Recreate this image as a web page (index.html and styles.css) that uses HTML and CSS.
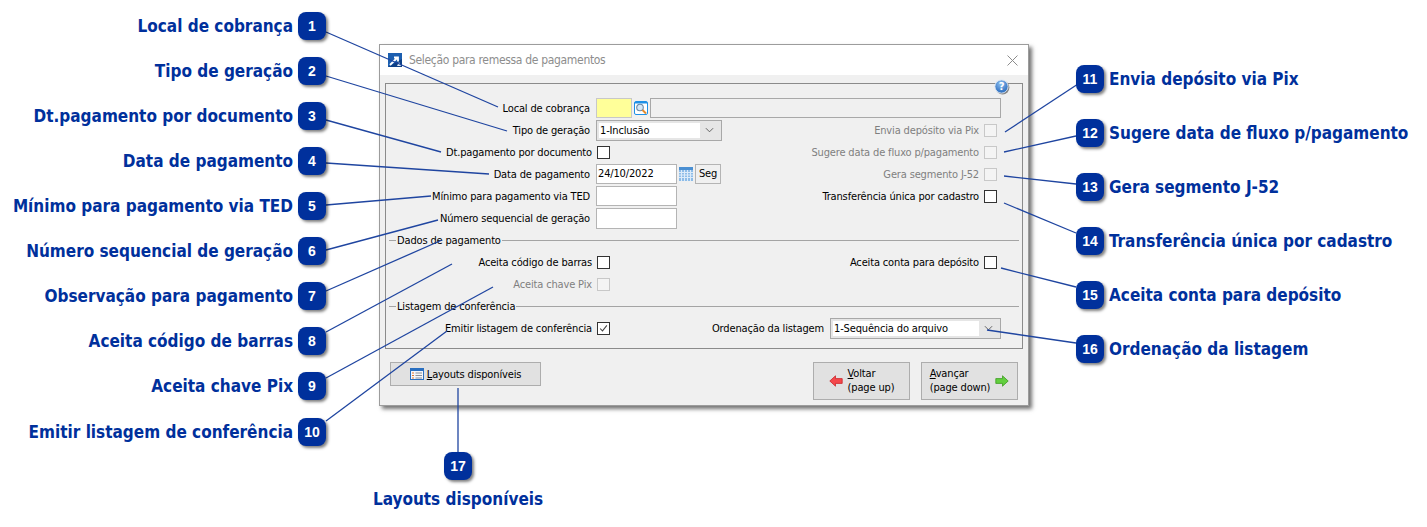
FILE: index.html
```html
<!DOCTYPE html>
<html lang="pt-BR">
<head>
<meta charset="utf-8">
<title>Seleção para remessa de pagamentos</title>
<link rel="stylesheet" href="styles.css">
</head>
<body>
<div class="stage">
  <section class="dialog">
    <header class="titlebar">
      <svg class="app-icon" viewBox="0 0 14 14"><rect width="14" height="14" fill="#1c5fb0"/><path d="M0 14 L14 14 L14 6 Z" fill="#0d3f86"/><path d="M2 12 L9 5 M6 4.500 H10 V8.500" fill="none" stroke="#fff" stroke-width="1.800"/><path d="M9 13 L11 9 L13 13 Z" fill="#dfe9f5"/></svg>
      <span class="title">Seleção para remessa de pagamentos</span>
      <svg class="close" viewBox="0 0 11 11"><path d="M0.500 0.500 L10.500 10.500 M10.500 0.500 L0.500 10.500" stroke="#8c8c8c" stroke-width="1" fill="none"/></svg>
    </header>
    <div class="panel">
      <svg class="help" viewBox="0 0 16 16"><defs><radialGradient id="hb" cx="45%" cy="30%" r="75%"><stop offset="0" stop-color="#8fc0f0"/><stop offset="1" stop-color="#1f62b8"/></radialGradient></defs><circle cx="8.600" cy="8.600" r="6.800" fill="#555" opacity=".7"/><circle cx="7.500" cy="7.500" r="6.600" fill="url(#hb)" stroke="#dce8f5" stroke-width=".9"/><text x="7.500" y="11" text-anchor="middle" class="help-mark">?</text></svg>
      <div class="row">
        <span class="lbl">Local de cobrança</span>
        <span class="field field-code"></span>
        <svg class="lookup" viewBox="0 0 14 14"><rect x=".5" y=".5" width="13" height="13" rx="1.500" fill="#fff" stroke="#1e90e6"/><rect x="1" y="1" width="12" height="1.500" fill="#1e90e6"/><circle cx="6" cy="6.500" r="3.300" fill="#d5e8f7" stroke="#6a8aa8" stroke-width="1.100"/><path d="M8.500 9 L12 12.500" stroke="#e58a2b" stroke-width="2"/></svg>
        <span class="field field-desc"></span>
      </div>
      <div class="row">
        <span class="lbl">Tipo de geração</span>
        <span class="select select-tipo"><span class="select-value">1-Inclusão</span><svg class="chev" viewBox="0 0 10 6"><path d="M1 1 L5 5 L9 1" fill="none" stroke="#555" stroke-width="1"/></svg></span>
        <span class="right"><span class="lbl-r off">Envia depósito via Pix</span><span class="check off"></span></span>
      </div>
      <div class="row">
        <span class="lbl lbl-c">Dt.pagamento por documento</span>
        <span class="check"></span>
        <span class="right"><span class="lbl-r off">Sugere data de fluxo p/pagamento</span><span class="check off"></span></span>
      </div>
      <div class="row">
        <span class="lbl">Data de pagamento</span>
        <span class="field field-num">24/10/2022</span>
        <svg class="calendar" viewBox="0 0 14 14"><rect width="14" height="14" fill="#8dbce8"/><rect width="14" height="3" fill="#4a8fd2"/><path d="M0 5.500 H14 M0 8 H14 M0 10.500 H14 M2.500 3 V14 M5.500 3 V14 M8.500 3 V14 M11.500 3 V14" stroke="#dcebf9" stroke-width="1"/></svg>
        <span class="field field-day">Seg</span>
        <span class="right"><span class="lbl-r off">Gera segmento J-52</span><span class="check off"></span></span>
      </div>
      <div class="row">
        <span class="lbl">Mínimo para pagamento via TED</span>
        <span class="field field-num"></span>
        <span class="right"><span class="lbl-r">Transferência única por cadastro</span><span class="check"></span></span>
      </div>
      <div class="row">
        <span class="lbl">Número sequencial de geração</span>
        <span class="field field-num field-tall"></span>
      </div>
      <div class="legend"><span>Dados de pagamento</span></div>
      <div class="row">
        <span class="lbl lbl-c">Aceita código de barras</span>
        <span class="check"></span>
        <span class="right"><span class="lbl-r">Aceita conta para depósito</span><span class="check"></span></span>
      </div>
      <div class="row">
        <span class="lbl lbl-c off">Aceita chave Pix</span>
        <span class="check off"></span>
      </div>
      <div class="legend"><span>Listagem de conferência</span></div>
      <div class="row">
        <span class="lbl lbl-c">Emitir listagem de conferência</span>
        <span class="check"><svg viewBox="0 0 13 13"><path d="M2.500 6.500 L5.300 9.300 L10.500 2.800" fill="none" stroke="#444" stroke-width="1.200"/></svg></span>
        <span class="right right-select"><span class="lbl-r">Ordenação da listagem</span><span class="select select-ord"><span class="select-value">1-Sequência do arquivo</span><svg class="chev" viewBox="0 0 10 6"><path d="M1 1 L5 5 L9 1" fill="none" stroke="#555" stroke-width="1"/></svg></span></span>
      </div>
    </div>
    <footer class="actions">
      <button class="btn btn-layouts" type="button">
        <svg class="ico-layouts" viewBox="0 0 14 12"><rect x=".5" y=".5" width="13" height="11" fill="#f4f6fa" stroke="#2a6fc0"/><rect x="1" y="1" width="12" height="2" fill="#2a6fc0"/><path d="M2 5 H4 M2 7.500 H4 M2 10 H4" stroke="#e2762a" stroke-width="1.200"/><path d="M5.500 5 H12 M5.500 7.500 H12 M5.500 10 H12" stroke="#8a8f98" stroke-width="1"/></svg>
        <span><u>L</u>ayouts disponíveis</span>
      </button>
      <button class="btn btn-nav btn-back" type="button">
        <svg class="arrow" viewBox="0 0 14 12"><path d="M6.500 .8 L.8 6 L6.500 11.200 V8.400 H13.200 V3.600 H6.500 Z" fill="#f4484c" stroke="#c9272c" stroke-width=".8"/></svg>
        <span class="btn-text"><u>V</u>oltar<br>(page up)</span>
      </button>
      <button class="btn btn-nav btn-next" type="button">
        <span class="btn-text"><u>A</u>vançar<br>(page down)</span>
        <svg class="arrow" viewBox="0 0 14 12"><path d="M7.500 .8 L13.200 6 L7.500 11.200 V8.400 H.8 V3.600 H7.500 Z" fill="#62cf3e" stroke="#3e9c22" stroke-width=".8"/></svg>
      </button>
    </footer>
  </section>

  <svg class="leaders" viewBox="0 0 1427 527">
    <g stroke="#1f45a0" stroke-width="1.300" fill="none">
      <path d="M326 32 L498 107"/><path d="M326 76 L507 131"/><path d="M326 120 L441 152"/><path d="M326 163 L489 174"/><path d="M326 205 L431 196"/><path d="M326 250 L438 220"/><path d="M326 291 L442 240"/><path d="M326 332 L452 264"/><path d="M326 378 L493 287"/><path d="M326 421 L447 331"/>
      <path d="M1005 132 L1078 84"/><path d="M1004 152 L1076 136"/><path d="M1004 176 L1076 184"/><path d="M1004 203 L1076 233"/><path d="M1001 268 L1076 287"/><path d="M987 330 L1076 343"/><path d="M458 388 V452"/>
    </g>
  </svg>

  <ol class="notes notes-left">
    <li><span class="note-text">Local de cobrança</span><b class="badge">1</b></li>
    <li><span class="note-text">Tipo de geração</span><b class="badge">2</b></li>
    <li><span class="note-text">Dt.pagamento por documento</span><b class="badge">3</b></li>
    <li><span class="note-text">Data de pagamento</span><b class="badge">4</b></li>
    <li><span class="note-text">Mínimo para pagamento via TED</span><b class="badge">5</b></li>
    <li><span class="note-text">Número sequencial de geração</span><b class="badge">6</b></li>
    <li><span class="note-text">Observação para pagamento</span><b class="badge">7</b></li>
    <li><span class="note-text">Aceita código de barras</span><b class="badge">8</b></li>
    <li><span class="note-text">Aceita chave Pix</span><b class="badge">9</b></li>
    <li><span class="note-text">Emitir listagem de conferência</span><b class="badge">10</b></li>
  </ol>
  <ol class="notes notes-right">
    <li><b class="badge">11</b><span class="note-text">Envia depósito via Pix</span></li>
    <li><b class="badge">12</b><span class="note-text">Sugere data de fluxo p/pagamento</span></li>
    <li><b class="badge">13</b><span class="note-text">Gera segmento J-52</span></li>
    <li><b class="badge">14</b><span class="note-text">Transferência única por cadastro</span></li>
    <li><b class="badge">15</b><span class="note-text">Aceita conta para depósito</span></li>
    <li><b class="badge">16</b><span class="note-text">Ordenação da listagem</span></li>
  </ol>
  <div class="note-bottom"><b class="badge">17</b><span class="note-text">Layouts disponíveis</span></div>
</div>
</body>
</html>
```
FILE: styles.css
```css
* { box-sizing: border-box; }
html, body { margin: 0; padding: 0; background: #fff; }
.stage {
  position: relative;
  width: 1427px;
  height: 527px;
  overflow: hidden;
  font-family: "DejaVu Sans", sans-serif;
}

/* dialog */
.dialog {
  position: absolute;
  left: 379px;
  top: 44px;
  width: 650px;
  height: 362px;
  background: #f0f0f0;
  border: 1px solid #9c9c9c;
  box-shadow: 3px 3px 4px rgba(0, 0, 0, .55);
  font-stretch: condensed;
  font-size: 11px;
  letter-spacing: -.15px;
  color: #000;
  display: flex;
  flex-direction: column;
}
.titlebar {
  height: 30px;
  background: #fff;
  display: flex;
  align-items: center;
  padding: 0 10px 0 8px;
}
.app-icon { width: 14px; height: 14px; flex: none; }
.title { margin-left: 7px; font-size: 12px; letter-spacing: -.32px; color: #8d8d8d; }
.close { width: 11px; height: 11px; margin-left: auto; }

.panel {
  position: relative;
  margin: 8px 5px 0;
  height: 266px;
  padding-top: 13px;
  border: 1px solid #8b8b8b;
}
.help { position: absolute; right: 12px; top: -5px; width: 16px; height: 16px; }
.help-mark { font: bold 10px "DejaVu Sans", sans-serif; fill: #fff; }

.row { display: flex; align-items: center; height: 22px; }
.lbl { width: 204px; margin-right: 6px; text-align: right; white-space: nowrap; flex: none; }
.lbl-c { width: 206px; margin-right: 5px; }
.lbl-r { white-space: nowrap; margin-right: 5px; }
.off { color: #7f7f7f; }
.right { margin-left: auto; padding-right: 25px; display: flex; align-items: center; }
.right-select { padding-right: 21px; }
.right-select .lbl-r { margin-right: 6px; }

.field {
  height: 20px;
  border: 1px solid #b4b4b4;
  background: #fff;
  line-height: 18px;
  white-space: nowrap;
  flex: none;
}
.field-code { width: 36px; background: #ffff99; border-color: #c8c8c8; }
.field-desc { width: 351px; background: #f0f0f0; border-color: #a8a8a8; }
.field-num { width: 81px; padding-left: 1px; }
.field-tall { height: 21px; }
.field-day { width: 26px; background: #f0f0f0; text-align: center; margin-left: 2px; }
.lookup { width: 14px; height: 14px; margin: 0 2px; flex: none; }
.calendar { width: 14px; height: 14px; margin-left: 2px; flex: none; }

.select {
  height: 21px;
  border: 1px solid #a8a8a8;
  background: #e6e6e6;
  padding: 2px;
  display: flex;
  align-items: center;
  flex: none;
}
.select-tipo { width: 126px; }
.select-ord { width: 171px; }
.select-value {
  flex: 1;
  height: 15px;
  line-height: 15px;
  background: #fff;
  padding-left: 1px;
  white-space: nowrap;
}
.chev { width: 9px; height: 6px; margin: 0 5px 0 5px; flex: none; }

.check {
  width: 13px;
  height: 13px;
  border: 1px solid #333;
  background: #fff;
  flex: none;
  display: block;
}
.check svg { display: block; width: 11px; height: 11px; }
.check.off { border-color: #c8c8c8; background: #f4f4f4; }

.legend {
  height: 22px;
  margin: 0 3px;
  display: flex;
  align-items: center;
}
.legend::before { content: ""; width: 7px; height: 1px; background: #a4a4a4; margin-right: 1px; }
.legend::after { content: ""; flex: 1; height: 1px; background: #a4a4a4; margin-left: 1px; }

/* buttons */
.actions { display: flex; margin: 13px 5px 0; padding: 0 5px; gap: 11px; align-items: flex-start; }
.btn {
  font: inherit;
  font-stretch: condensed;
  letter-spacing: inherit;
  color: #000;
  background: #e1e1e1;
  border: 1px solid #adadad;
  padding: 0;
  display: flex;
  align-items: center;
  flex: none;
}
.btn-layouts { width: 151px; height: 24px; justify-content: center; gap: 3px; margin-right: auto; }
.ico-layouts { width: 14px; height: 12px; }
.btn-nav { width: 97px; height: 38px; justify-content: center; gap: 5px; text-align: left; line-height: 14px; }
.arrow { width: 14px; height: 12px; flex: none; }
.btn-text { white-space: nowrap; }

/* callouts */
.leaders { position: absolute; left: 0; top: 0; width: 1427px; height: 527px; pointer-events: none; }
.notes { position: absolute; margin: 0; padding: 0; list-style: none; }
.notes li { display: flex; align-items: center; gap: 5px; }
.notes-left { top: 12px; right: 1101px; display: flex; flex-direction: column; gap: 17px; align-items: flex-end; }
.notes-left li:last-child { margin-top: 1px; }
.notes-right { top: 65px; left: 1076px; display: flex; flex-direction: column; gap: 26px; }
.note-text {
  font-weight: bold;
  font-size: 17px;
  font-stretch: condensed;
  color: #00309c;
  white-space: nowrap;
  line-height: 28px;
}
.badge {
  width: 28px;
  height: 28px;
  border-radius: 8px;
  background: #00309c;
  color: #fff;
  font-family: "Liberation Sans", sans-serif;
  font-size: 14px;
  font-weight: bold;
  display: flex;
  align-items: center;
  justify-content: center;
  box-shadow: 2px 2px 3px rgba(0, 0, 0, .5);
  flex: none;
}
.note-bottom {
  position: absolute;
  left: 358px;
  top: 452px;
  width: 200px;
  display: flex;
  flex-direction: column;
  align-items: center;
  gap: 5px;
}
```
